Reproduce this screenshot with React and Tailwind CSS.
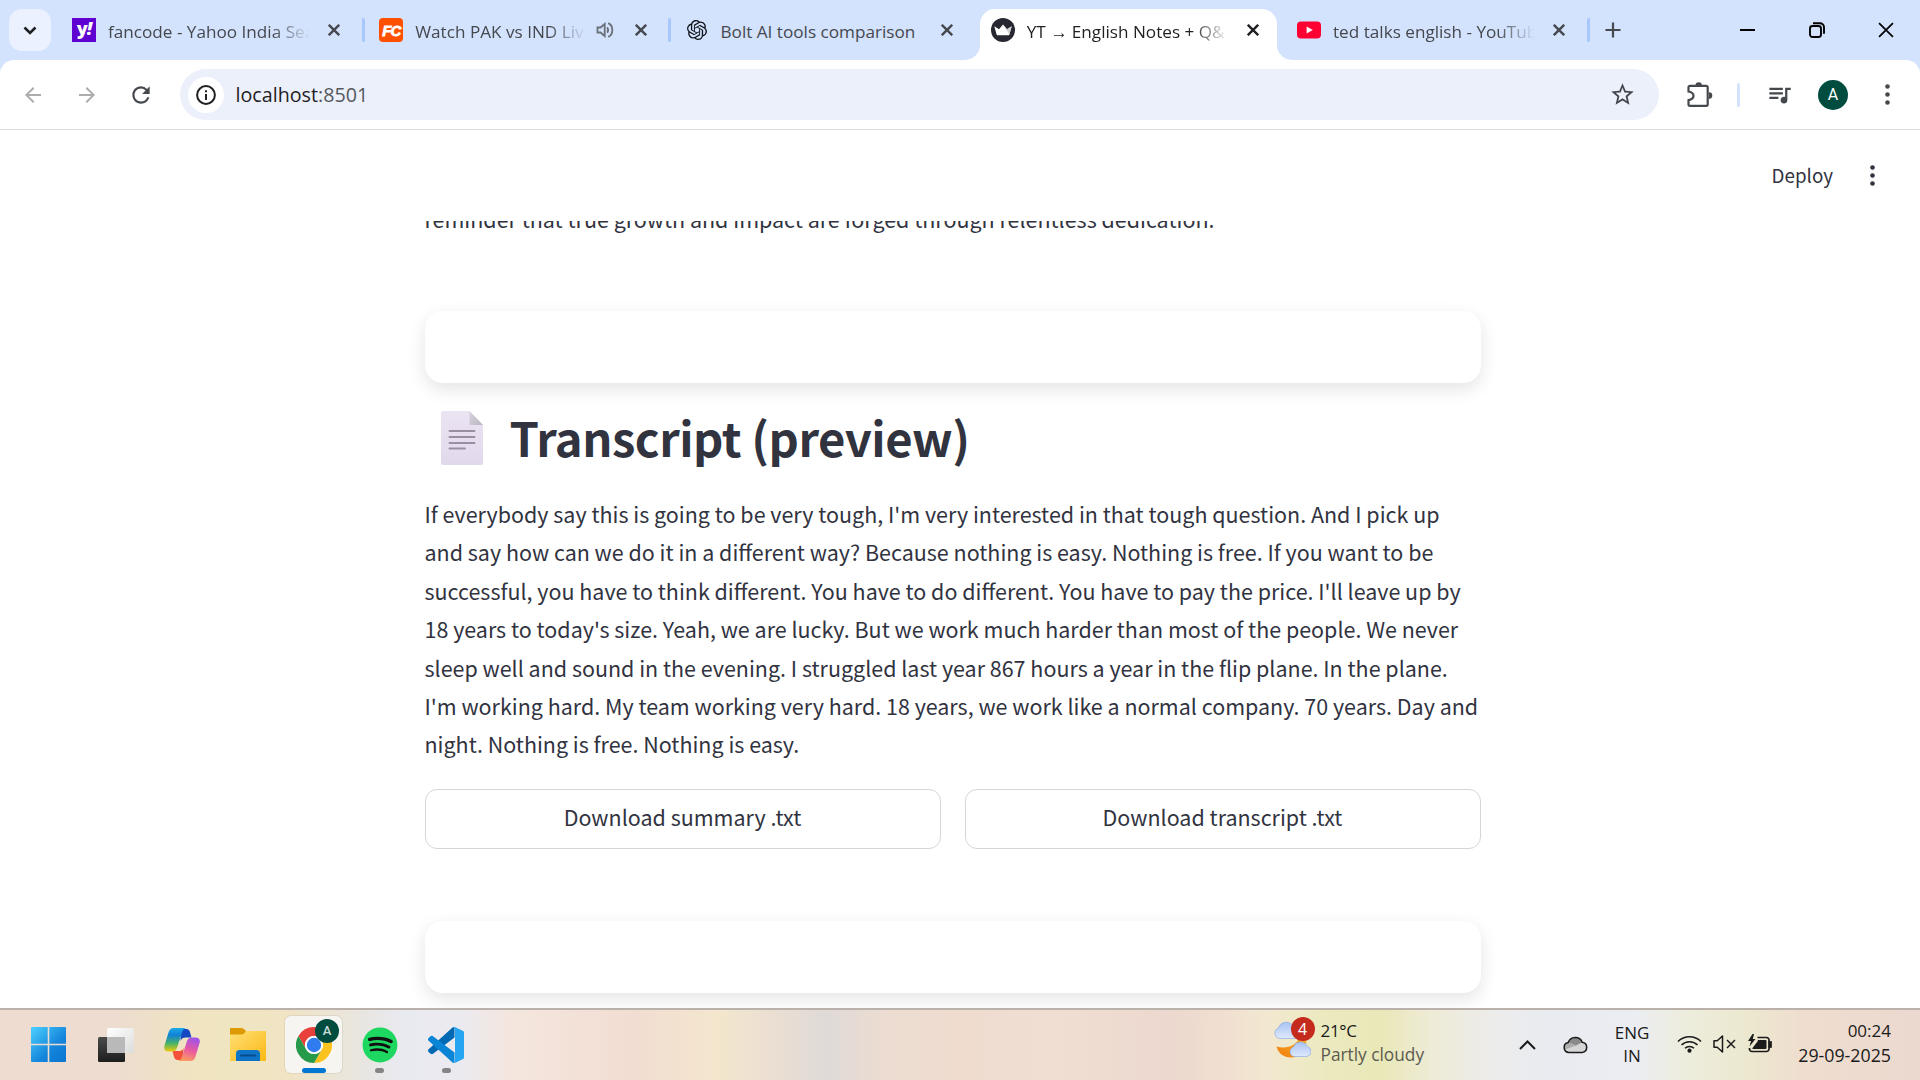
import React from "react";
import { MdArrowBack, MdArrowForward, MdRefresh, MdStarBorder, MdQueueMusic } from "react-icons/md";
import { SiOpenai } from "react-icons/si";
import { FaSpotify } from "react-icons/fa";

const UI = "font-['Open_Sans','Noto_Sans',sans-serif]";
const DOC = "font-['Noto_Sans_CJK_SC',sans-serif]";

function Cross({ size = 12, color = "#3f4247", width = 2.4 }) {
  return (
    <svg width={size} height={size} viewBox="0 0 12 12" stroke={color} strokeWidth={width}>
      <path d="M.8.8 11.2 11.2M11.2.8.8 11.2" />
    </svg>
  );
}

function YahooIcon() {
  return (
    <span className="flex size-6 items-center justify-center bg-[#5f01d1] pb-1 text-[18px] leading-none font-extrabold tracking-[-1px] text-white">
      y<i>!</i>
    </span>
  );
}

function FanCodeIcon() {
  return (
    <span className="flex size-6 items-center justify-center rounded-[4px] bg-[#ff5000] font-['Liberation_Sans',sans-serif] text-[15px] leading-none font-bold tracking-[-1px] text-white italic [-webkit-text-stroke:0.8px_white]">
      FC
    </span>
  );
}

function CrownIcon() {
  return (
    <svg viewBox="0 0 24 24" className="size-6">
      <circle cx="12" cy="12" r="12" fill="#262730" />
      <path d="M3.3 8.2 8 11.2 12 6.4l4 4.8 4.7-3-2.3 8.2c-.2.6-.6.9-1.2.9H6.8c-.6 0-1-.3-1.2-.9z" fill="#fff" />
      <path d="m12 6.4 4 4.8 4.7-3-2.3 8.2z" fill="#cfcfd2" />
    </svg>
  );
}

function YoutubeIcon() {
  return (
    <svg viewBox="0 0 24 24" className="size-6">
      <rect x="0" y="3.5" width="24" height="17" rx="4" fill="#ff0033" />
      <path d="m9.6 8.5 6.2 3.5-6.2 3.5z" fill="#fff" />
    </svg>
  );
}

function SpeakerIcon() {
  return (
    <svg viewBox="0 0 18 18" className="size-[18px]" fill="none" stroke="#6a7079" strokeWidth="1.8">
      <path d="M1.5 6.5h3L8.7 3v12l-4.2-3.5h-3z" />
      <path d="M11.2 6.2q1.8 2.8 0 5.6M12.2 2.1c5.5 2.2 5.5 11.600 0 13.8" />
    </svg>
  );
}

const tabs = [
  { title: "fancode - Yahoo India Sea", icon: <YahooIcon />, sep: true, fade: true },
  { title: "Watch PAK vs IND Liv", icon: <FanCodeIcon />, sep: true, audio: true, fade: true },
  { title: "Bolt AI tools comparison", icon: <SiOpenai className="mx-0.5 size-5 text-[#101318]" /> },
  { title: "YT → English Notes + Q&", icon: <CrownIcon />, active: true, fade: true },
  { title: "ted talks english - YouTub", icon: <YoutubeIcon />, sep: true, fade: true },
];

function Tab({ title, icon, sep, audio, active, fade }) {
  return (
    <div className="flex h-[51px] w-[306.25px] shrink-0">
      <div className={"relative ml-[5px] flex h-full w-[297px] shrink-0 rounded-t-[15px] " + (active ? "bg-white" : "")}>
        {active && (
          <>
            <svg className="absolute bottom-0 -left-[15px]" width="15" height="15">
              <path d="M15 0v15H0A15 15 0 0 0 15 0z" fill="#fff" />
            </svg>
            <svg className="absolute -right-[15px] bottom-0" width="15" height="15">
              <path d="M0 0v15h15A15 15 0 0 1 0 0z" fill="#fff" />
            </svg>
          </>
        )}
        <div className={"flex h-[42px] w-full items-center " + (audio ? "pl-[12px]" : "pl-[11px]")}>
          {icon}
          <span
            className={
              "ml-3 overflow-hidden pt-[3px] text-[17.15px] leading-6 whitespace-nowrap " +
              (audio ? "w-[171px] " : "w-[202px] ") +
              (fade ? "[mask-image:linear-gradient(to_right,black_calc(100%-38px),transparent)] " : "") +
              (active ? "text-[#1f2023]" : "text-[#45484d]")
            }
          >
            {title}
          </span>
          {audio && <span className="ml-[10px] flex"><SpeakerIcon /></span>}
          <span className={audio ? "ml-[21px]" : "ml-[18px]"}>
            <Cross color={active ? "#1f2023" : "#45484d"} />
          </span>
        </div>
      </div>
      {sep && <span className="mt-[9px] ml-[4px] h-6 w-[3px] shrink-0 rounded-full bg-[#a8c7fa]" />}
    </div>
  );
}

function TabStrip() {
  return (
    <div className={"flex h-[60px] shrink-0 bg-[#d3e2fd] pt-[9px] " + UI}>
      <button className="ml-[9px] flex h-[42px] w-[42px] shrink-0 items-center justify-center rounded-[13px] bg-[#ebf1fe]">
        <svg width="14" height="9" viewBox="0 0 14 9" fill="none" stroke="#1f2023" strokeWidth="2.6">
          <path d="m1.5 1.5 5.5 5.5 5.500-5.5" />
        </svg>
      </button>
      <div className="ml-[5px] flex">
        {tabs.map((t) => <Tab key={t.title} {...t} />)}
      </div>
      <div className="flex h-[42px] flex-1 items-center">
        <svg className="ml-[18px]" width="16" height="16" stroke="#45484d" strokeWidth="2.2">
          <path d="M8 .5v15M.5 8h15" />
        </svg>
        <div className="mr-[26px] ml-auto flex items-center gap-[53.5px] pb-px">
          <span className="h-[2px] w-[15px] bg-black" />
          <svg width="16" height="16" fill="none" stroke="#000" strokeWidth="1.9">
            <rect x="1" y="4" width="11" height="11" rx="2.5" />
            <path d="M4 1.2h7a4 4 0 0 1 4 4v6.5" />
          </svg>
          <Cross size={16} color="#000" width={1.3} />
        </div>
      </div>
    </div>
  );
}

function Dots({ color }) {
  return (
    <svg width="5" height="21" viewBox="0 0 5 21" fill={color}>
      <circle cx="2.5" cy="2.5" r="2.3" />
      <circle cx="2.5" cy="10.5" r="2.3" />
      <circle cx="2.5" cy="18.5" r="2.3" />
    </svg>
  );
}

function Toolbar() {
  return (
    <div className="shrink-0 bg-[#d3e2fd]">
      <div className={"flex h-[70px] items-center rounded-t-[14px] border-b border-[#dcdde0] bg-white " + UI}>
        <div className="ml-[21px] flex items-center gap-[30px]">
          <MdArrowBack className="size-6 text-[#adadb0]" />
          <MdArrowForward className="size-6 text-[#adadb0]" />
          <MdRefresh className="size-[26px] -translate-x-px text-[#45484d]" />
        </div>
        <div className="ml-[25px] flex h-[51px] w-[1479px] items-center rounded-full bg-[#ecf0fa] pl-2">
          <span className="flex size-9 items-center justify-center rounded-full bg-white">
            <svg width="20" height="20" fill="none" stroke="#1f2023" strokeWidth="2">
              <circle cx="10" cy="10" r="8.9" />
              <path d="M10 9v6M10 5.3v2" />
            </svg>
          </span>
          <span className="ml-[11.5px] text-[19.7px] leading-6 text-[#55585d]">
            <span className="text-[#1f2023]">localhost</span>:8501
          </span>
          <MdStarBorder className="mr-[23px] ml-auto size-[27px] text-[#45484d]" />
        </div>
        <svg className="ml-[28px]" width="26" height="26" viewBox="0 0 26 26">
          <path d="M8.500 3.500a3.200 3.200 0 0 1 6.400 0zM22 10.300a3.300 3.300 0 0 1 0 6.600z" fill="#45484d" />
          <path d="M3 3.800h16.200a1.500 1.500 0 0 1 1.500 1.500v17a1.500 1.500 0 0 1-1.500 1.500H3A1.500 1.500 0 0 1 1.500 22.300v-4.200c3.300-.6 5-2 5-4.300s-1.700-3.700-5-4.300V5.300A1.500 1.500 0 0 1 3 3.800z" fill="none" stroke="#45484d" strokeWidth="2.2" />
        </svg>
        <span className="ml-[24px] h-6 w-[3px] rounded-full bg-[#d3e2fd]" />
        <MdQueueMusic className="ml-[26px] size-[27px] text-[#45484d]" />
        <span className="ml-[25px] flex size-[30px] items-center justify-center rounded-full bg-[#004d40] font-['Roboto',sans-serif] text-[16px] text-white">A</span>
        <span className="ml-[36.5px]"><Dots color="#45484d" /></span>
      </div>
    </div>
  );
}

function DocumentIcon() {
  return (
    <svg className="mx-4 translate-y-[2px]" width="42" height="54" viewBox="0 0 42 54">
      <defs>
        <linearGradient id="page" x1="0" y1="0" x2="0" y2="1">
          <stop offset="0" stopColor="#ebe4f3" />
          <stop offset="1" stopColor="#e2d8ec" />
        </linearGradient>
        <linearGradient id="fold" x1="0" y1="0" x2="1" y2="1">
          <stop offset="0" stopColor="#d8d2de" />
          <stop offset="1" stopColor="#bdb7c4" />
        </linearGradient>
      </defs>
      <path d="M1.500 0h27L42 14v38a2 2 0 0 1-2 2H2a2 2 0 0 1-2-2V1.500A1.500 1.500 0 0 1 1.500 0z" fill="url(#page)" />
      <path d="M28.500 0 42 14H30a1.500 1.500 0 0 1-1.500-1.500z" fill="url(#fold)" />
      <path d="M8.500 20H33.500M8.500 26H33.500M8.500 32H33.500M8.500 37.500H24" stroke="#998fa3" strokeWidth="1.9" strokeLinecap="round" />
    </svg>
  );
}

const transcript = [
  "If everybody say this is going to be very tough, I'm very interested in that tough question. And I pick up",
  "and say how can we do it in a different way? Because nothing is easy. Nothing is free. If you want to be",
  "successful, you have to think different. You have to do different. You have to pay the price. I'll leave up by",
  "18 years to today's size. Yeah, we are lucky. But we work much harder than most of the people. We never",
  "sleep well and sound in the evening. I struggled last year 867 hours a year in the flip plane. In the plane.",
  "I'm working hard. My team working very hard. 18 years, we work like a normal company. 70 years. Day and",
  "night. Nothing is free. Nothing is easy.",
];

function Card({ className }) {
  return <div className={"h-[72px] shrink-0 rounded-[18px] bg-white shadow-[0_6px_18px_rgba(0,0,0,0.11)] " + className} />;
}

function DownloadButton({ children }) {
  return (
    <button className="flex h-[60px] flex-1 items-center justify-center rounded-[12px] border border-[#d6d6d8] bg-white pb-[5px] leading-8">
      {children}
    </button>
  );
}

function Page() {
  return (
    <main className={"flex min-h-0 flex-1 flex-col bg-white text-[#31333f] " + DOC}>
      <header className="flex h-[91px] shrink-0 items-center justify-end pr-[45.5px]">
        <span className="pb-[2px] text-[18.8px] leading-6">Deploy</span>
        <span className="ml-[36.5px]"><Dots color="#31333f" /></span>
      </header>
      <div className="min-h-0 flex-1 overflow-hidden">
        <div className="ml-[424.5px] flex w-[1056px] flex-col text-[21.48px] leading-[38.4px]">
          <p className="-mt-[21.2px]">reminder that true growth and impact are forged through relentless dedication.</p>
          <Card className="mt-[72.8px]" />
          <h1 className="mt-[23.4px] flex h-[60px] items-center text-[47.2px] leading-[60px] font-bold tracking-[-0.5px]">
            <DocumentIcon />
            <span className="ml-[11px] translate-y-px">Transcript (preview)</span>
          </h1>
          <p className="mt-[28.6px]">
            {transcript.map((line) => <span key={line} className="block whitespace-nowrap">{line}</span>)}
          </p>
          <div className="mt-[25.2px] flex gap-6">
            <DownloadButton>Download summary .txt</DownloadButton>
            <DownloadButton>Download transcript .txt</DownloadButton>
          </div>
          <Card className="mt-[72px]" />
        </div>
      </div>
    </main>
  );
}

function WindowsIcon() {
  return (
    <svg width="35" height="35" viewBox="0 0 35 35">
      <defs>
        <linearGradient id="win" gradientUnits="userSpaceOnUse" x1="0" y1="0" x2="35" y2="35">
          <stop offset="0" stopColor="#4cd0fe" />
          <stop offset=".6" stopColor="#1486dc" />
          <stop offset="1" stopColor="#0a74cf" />
        </linearGradient>
      </defs>
      <path fill="url(#win)" d="M1 0H16.700V16.700H0V1A1 1 0 0 1 1 0zM18.300 0H34A1 1 0 0 1 35 1V16.700H18.300zM0 18.300H16.700V35H1A1 1 0 0 1 0 34zM18.300 18.300H35V34A1 1 0 0 1 34 35H18.300z" />
    </svg>
  );
}

function TaskViewIcon() {
  return (
    <svg className="translate-x-px" width="36" height="34" viewBox="0 0 36 34">
      <defs>
        <linearGradient id="tv" x1="0" y1="0" x2="0" y2="1">
          <stop offset="0" stopColor="#4b4b4b" />
          <stop offset="1" stopColor="#1d1d1d" />
        </linearGradient>
        <linearGradient id="tw" x1="0" y1="0" x2="1" y2="1">
          <stop offset="0" stopColor="#fff" />
          <stop offset="1" stopColor="#dcdcdc" />
        </linearGradient>
      </defs>
      <rect x="0" y="9" width="27" height="25" rx="1.5" fill="url(#tv)" />
      <rect x="9" y="0" width="27" height="25" rx="1.5" fill="url(#tw)" />
      <path d="M9 9h18v16H9z" fill="#b9b9b9" />
    </svg>
  );
}

function CopilotIcon() {
  return (
    <svg className="translate-x-px" width="36" height="33" viewBox="0 0 36 33">
      <defs>
        <linearGradient id="cl" x1="0" y1="0" x2="0" y2="1">
          <stop offset="0" stopColor="#1ba9e8" />
          <stop offset=".3" stopColor="#1180d8" />
          <stop offset=".65" stopColor="#45b26a" />
          <stop offset="1" stopColor="#f0ca0a" />
        </linearGradient>
        <linearGradient id="cr" x1=".6" y1="0" x2=".3" y2="1">
          <stop offset="0" stopColor="#a152e8" />
          <stop offset=".5" stopColor="#ea5aa0" />
          <stop offset="1" stopColor="#fba05c" />
        </linearGradient>
      </defs>
      <path d="M17 1h5.500c2 0 3 1.500 3.600 3.500L27.500 9.500H22c-3 0-4.500 1-5.500 3.500z" fill="#1748c4" />
      <path d="M18.500 32H13.500c-2 0-3-1.500-3.600-3.500L8.500 23H14c3 0 4.500-.5 5.500-3z" fill="#f4513b" />
      <path d="M9.500 0H23c-3 0-4 1.500-5 4.500L13 20c-1 2.500-2.500 3.500-5 3.500H4.500c-3.500 0-5-2.500-4.100-5.500L4.500 4.500C5.400 1.500 7 0 9.500 0z" fill="url(#cl)" />
      <path d="M26.500 33H13c3 0 4-1.500 5-4.500L23 13c1-2.500 2.500-3.500 5-3.500h3.500c3.500 0 5 2.500 4.100 5.500l-4.100 13.500c-.9 3-2.500 4.500-5 4.500z" fill="url(#cr)" />
    </svg>
  );
}

function FolderIcon() {
  return (
    <svg className="translate-x-px" width="36" height="33" viewBox="0 0 36 33">
      <defs>
        <linearGradient id="fo" x1="0" y1="0" x2="1" y2="1">
          <stop offset="0" stopColor="#ffdf77" />
          <stop offset="1" stopColor="#fbb914" />
        </linearGradient>
      </defs>
      <path d="M1 0h10c1.500 0 2.500.6 3.500 1.600L16 3v4H0V1a1 1 0 0 1 1-1z" fill="#dd9a04" />
      <path d="M0 6.500h11c1.500 0 2.500-.5 3.500-1.500L16 3h19a1 1 0 0 1 1 1v28a1 1 0 0 1-1 1H0z" fill="url(#fo)" />
      <path d="M6 33v-7.500a3.500 3.500 0 0 1 3.500-3.500h17a3.500 3.500 0 0 1 3.500 3.500V33z" fill="#0d74c8" />
      <path d="M11 27.500h14" stroke="#0a4a8c" strokeWidth="1.8" strokeLinecap="round" />
    </svg>
  );
}

function ChromeIcon() {
  return (
    <svg width="36" height="36" viewBox="0 0 48 48">
      <path d="M24 12H44.780a23.994 23.994 0 0 0-41.564.003L13.608 30A11.985 11.985 0 0 1 24 12z" fill="#e8403a" />
      <path d="M34.391 30.003 24 48A23.994 23.994 0 0 0 44.780 12.003H24a11.985 11.985 0 0 1 10.391 18z" fill="#fcc31e" />
      <path d="M13.609 30.003 3.218 12.006A23.994 23.994 0 0 0 24 48l10.391-17.997a11.985 11.985 0 0 1-20.782 0z" fill="#27994a" />
      <circle cx="24" cy="24" r="12" fill="#fff" />
      <circle cx="24" cy="24" r="9.6" fill="#2f7bf0" />
    </svg>
  );
}

function VsCodeIcon() {
  return (
    <svg width="36" height="36" viewBox="0 0 36 36">
      <path d="M26.500 0v10.500L5 26.700c-.8.6-1.700.6-2.400 0L.6 24.900c-.8-.8-.8-1.900 0-2.600L24.500.6z" fill="#0069b4" />
      <path d="M26.500 36V25.500L5 9.300c-.8-.6-1.700-.6-2.400 0L.6 11.100c-.8.8-.8 1.900 0 2.600l23.900 21.700z" fill="#0a84d4" />
      <path d="M24.500.6C25.400 0 26.300-.1 27.300.3l7.300 3.400c.9.4 1.400 1.100 1.400 2.100v24.400c0 1-.5 1.700-1.400 2.100l-7.300 3.400c-1 .4-1.900.3-2.800-.3 1.200.6 2.500-.1 2.500-1.500V2.100c0-1.400-1.300-2.100-2.500-1.500z" fill="#25a5f2" />
    </svg>
  );
}

function SpotifyIcon() {
  return (
    <span className="flex rounded-full bg-[radial-gradient(circle,#101010_60%,transparent_62%)]">
      <FaSpotify className="size-9 text-[#1ed760]" />
    </span>
  );
}

function AppSlot({ children, indicator, active }) {
  return (
    <div className="flex w-[66.25px] justify-center">
      <div
        className={
          "relative flex h-[57px] w-[57px] items-center justify-center rounded-[6px] " +
          (active ? "bg-[#f7f5f2] shadow-[0_0_0_1px_rgba(0,0,0,0.06)]" : "")
        }
      >
        {children}
        {indicator && <span className={"absolute bottom-0 h-[5px] rounded-full " + indicator} />}
        {active && (
          <span className="absolute top-[3px] left-[30px] flex size-6 items-center justify-center rounded-full bg-[#004d40] font-['Roboto',sans-serif] text-[13px] font-medium text-[#c9dcd8]">
            A
          </span>
        )}
      </div>
    </div>
  );
}

function WeatherIcon() {
  return (
    <div className="relative h-[44px] w-[38px]">
      <svg width="38" height="44" viewBox="0 0 38 44">
        <defs>
          <linearGradient id="cloud" x1="0" y1="0" x2="0" y2="1">
            <stop offset="0" stopColor="#a9c3f5" />
            <stop offset="1" stopColor="#dfe9fc" />
          </linearGradient>
          <linearGradient id="moon" x1="1" y1="0" x2="0" y2="1">
            <stop offset="0" stopColor="#fdb51e" />
            <stop offset="1" stopColor="#f07a12" />
          </linearGradient>
        </defs>
        <path d="M6 21.500a5.500 5.500 0 0 1-.5-10.500 8 8 0 0 1 15-1l2 11.500z" fill="url(#cloud)" stroke="#86a6e2" strokeWidth=".6" />
        <path d="M32.500 20c3 11-4 20.500-14.500 20.500-7.500 0-12.500-4-14.500-11 10 3 20-1 23-9.500z" fill="url(#moon)" />
        <path d="M20.500 39.500a5 5 0 0 1 0-9.500 7.500 7.500 0 0 1 14-.5 5.200 5.200 0 0 1-.5 10z" fill="url(#cloud)" stroke="#86a6e2" strokeWidth=".6" />
      </svg>
      <span className="absolute top-0 left-[17.5px] flex size-6 items-center justify-center rounded-full bg-[#c42b1c] text-[16px] leading-none text-white">4</span>
    </div>
  );
}

function Taskbar() {
  return (
    <footer
      className={
        "flex h-[72px] shrink-0 border-t-2 border-[#bab1ab] text-[17.3px] leading-6 text-[#1b1b1b] " +
        "bg-[linear-gradient(to_right,#eddccf_0%,#eddccf_6%,#f0e5c0_10.5%,#f0e4c4_15%,#e8e6e2_19%,#e9eaf1_21%,#ebeaef_24%,#f4e6de_26.5%,#f2ddd2_33%,#f3e6cd_37.5%,#ecdfd2_40%,#dfdad7_43%,#ecdcd1_46%,#efdccf_50%,#f1ded3_55%,#ecd8ce_61%,#f1e0d1_64%,#f2e8d0_66%,#ebeabf_69%,#e9e8b8_72%,#eeebd6_74.5%,#ececec_78%,#e9ebf1_81%,#ebedf3_85%,#ededdc_88%,#ece8cf_91%,#efddcf_94%,#ebd9d0_100%)] " +
        UI
      }
    >
      <div className="ml-[15.5px] flex pt-[6px]">
        <AppSlot><WindowsIcon /></AppSlot>
        <AppSlot><TaskViewIcon /></AppSlot>
        <AppSlot><CopilotIcon /></AppSlot>
        <AppSlot><FolderIcon /></AppSlot>
        <AppSlot active indicator="w-6 bg-[#0078d4]"><ChromeIcon /></AppSlot>
        <AppSlot indicator="w-[9px] bg-[#858585]"><SpotifyIcon /></AppSlot>
        <AppSlot indicator="w-[9px] bg-[#858585]"><VsCodeIcon /></AppSlot>
      </div>
      <div className="ml-auto flex w-[647px]">
        <div className="flex w-[160px] pt-[7px]">
          <WeatherIcon />
          <div className="mt-[2px] ml-[9.5px] whitespace-nowrap">
            <div className="text-[17px] tracking-[-0.3px]">21°C</div>
            <div className="text-[#5c5a50]">Partly cloudy</div>
          </div>
        </div>
        <div className="ml-[70px] flex w-12 items-center justify-center">
          <svg width="17" height="10" viewBox="0 0 17 10" fill="none" stroke="#1b1b1b" strokeWidth="2">
            <path d="m1 9 7.500-7.500L16 9" />
          </svg>
        </div>
        <div className="flex w-12 items-center justify-center">
          <svg width="25" height="18" viewBox="0 0 25 18">
            <path d="M6 16.500a5 5 0 0 1-.8-9.900 7.500 7.500 0 0 1 14-.4 5.200 5.200 0 0 1 0 10.300z" fill="#d6d6d6" />
            <path d="M5.500 6.600a7.500 7.500 0 0 1 13.700-.4L13 9.500z" fill="#8a8a8a" />
            <path d="M2 13.500a5 5 0 0 1 3.500-7L13.500 9.500z" fill="#adadad" />
            <path d="M6 16.500a5 5 0 0 1-.8-9.900 7.500 7.500 0 0 1 14-.4 5.200 5.200 0 0 1 0 10.300z" fill="none" stroke="#1b1b1b" strokeWidth="1.5" />
          </svg>
        </div>
        <div className="w-[66px] pt-3 text-center text-[17px] leading-[22.7px]">
          ENG
          <br />
          IN
        </div>
        <div className="ml-3 flex items-center pb-[3px] text-[#1b1b1b]">
          <svg width="25" height="18" viewBox="0 0 25 18" fill="none" stroke="currentColor" strokeWidth="1.6">
            <path d="M1 6.500a16.300 16.300 0 0 1 23 0M4.500 10a11.300 11.300 0 0 1 16 0M8 13.300a6.400 6.400 0 0 1 9 0" />
            <circle cx="12.5" cy="15.7" r="1.3" fill="currentColor" />
          </svg>
          <svg className="ml-[11px]" width="24" height="18" viewBox="0 0 24 18" fill="none" stroke="currentColor" strokeWidth="1.5">
            <path d="M1 5.800h3.200L9.500 1v16l-5.300-4.800H1z" strokeLinejoin="round" />
            <path d="m14 5 8 8M22 5l-8 8" />
          </svg>
          <svg className="ml-[11px]" width="25" height="20" viewBox="0 0 25 20" fill="none" stroke="currentColor" strokeWidth="1.7">
            <path d="M9.500 3.500h9a2.500 2.500 0 0 1 2.500 2.500v9a2.500 2.500 0 0 1-2.500 2.500H4A2.500 2.500 0 0 1 1.500 15v-1" />
            <path d="M10 6h7.500a1 1 0 0 1 1 1v7a1 1 0 0 1-1 1H4.500v-1L9.500 7.500z" fill="currentColor" stroke="none" />
            <path d="M21.500 8h1.500v5h-1.500z" fill="currentColor" />
            <path d="M4.500 0 0 7h3L1.500 12.500 7.500 5H4.800L6 0z" fill="currentColor" stroke="none" />
          </svg>
        </div>
        <div className="mr-[29px] ml-auto pt-[9px] text-right">
          <div className="text-[17px]">00:24</div>
          <div className="text-[17.8px]">29-09-2025</div>
        </div>
      </div>
    </footer>
  );
}

export default function App() {
  return (
    <div className="flex h-[1080px] w-[1920px] flex-col overflow-hidden bg-white">
      <TabStrip />
      <Toolbar />
      <Page />
      <Taskbar />
    </div>
  );
}
